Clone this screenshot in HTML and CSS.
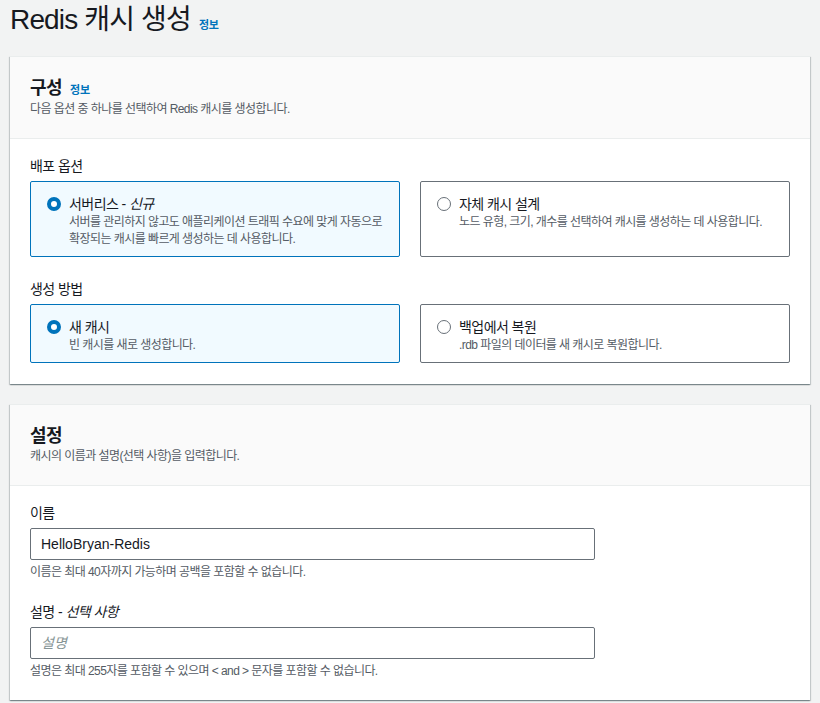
FILE: index.html
```html
<!DOCTYPE html>
<html lang="ko">
<head>
  <meta charset="UTF-8">
  <meta name="viewport" content="width=device-width, initial-scale=1.0">
  <title>Redis 캐시 생성</title>
  <link rel="stylesheet" href="styles.css">
</head>
<body>
  <header class="page-header">
    <h1 class="page-title">Redis 캐시 생성</h1>
    <a class="info-link" href="#">정보</a>
  </header>

  <main>
    <!-- 구성 -->
    <section class="panel">
      <div class="panel-header">
        <div class="panel-title-row">
          <h2 class="panel-title">구성</h2>
          <a class="info-link" href="#">정보</a>
        </div>
        <p class="panel-desc">다음 옵션 중 하나를 선택하여 Redis 캐시를 생성합니다.</p>
      </div>
      <div class="panel-body">
        <div class="field">
          <div class="field-label">배포 옵션</div>
          <div class="tiles">
            <label class="tile selected">
              <span class="radio checked"></span>
              <span class="tile-text">
                <span class="tile-title">서버리스 - <em>신규</em></span>
                <span class="tile-desc">서버를 관리하지 않고도 애플리케이션 트래픽 수요에 맞게 자동으로 확장되는 캐시를 빠르게 생성하는 데 사용합니다.</span>
              </span>
            </label>
            <label class="tile">
              <span class="radio"></span>
              <span class="tile-text">
                <span class="tile-title">자체 캐시 설계</span>
                <span class="tile-desc">노드 유형, 크기, 개수를 선택하여 캐시를 생성하는 데 사용합니다.</span>
              </span>
            </label>
          </div>
        </div>
        <div class="field">
          <div class="field-label">생성 방법</div>
          <div class="tiles">
            <label class="tile selected">
              <span class="radio checked"></span>
              <span class="tile-text">
                <span class="tile-title">새 캐시</span>
                <span class="tile-desc">빈 캐시를 새로 생성합니다.</span>
              </span>
            </label>
            <label class="tile">
              <span class="radio"></span>
              <span class="tile-text">
                <span class="tile-title">백업에서 복원</span>
                <span class="tile-desc">.rdb 파일의 데이터를 새 캐시로 복원합니다.</span>
              </span>
            </label>
          </div>
        </div>
      </div>
    </section>

    <!-- 설정 -->
    <section class="panel">
      <div class="panel-header">
        <div class="panel-title-row">
          <h2 class="panel-title">설정</h2>
        </div>
        <p class="panel-desc">캐시의 이름과 설명(선택 사항)을 입력합니다.</p>
      </div>
      <div class="panel-body">
        <div class="field">
          <div class="field-label">이름</div>
          <input class="text-input" type="text" value="HelloBryan-Redis">
          <p class="field-hint">이름은 최대 40자까지 가능하며 공백을 포함할 수 없습니다.</p>
        </div>
        <div class="field">
          <div class="field-label">설명 - <em>선택 사항</em></div>
          <input class="text-input" type="text" placeholder="설명">
          <p class="field-hint">설명은 최대 255자를 포함할 수 있으며 &lt; and &gt; 문자를 포함할 수 없습니다.</p>
        </div>
      </div>
    </section>
  </main>
</body>
</html>
```

FILE: styles.css
```css
* {
  margin: 0;
  padding: 0;
  box-sizing: border-box;
}

body {
  background-color: #f2f3f3;
  color: #16191f;
  font-family: "Liberation Sans", "Noto Sans CJK KR", sans-serif;
  font-size: 14px;
  line-height: 20px;
  letter-spacing: -0.04em;
  padding: 0 10px;
}

.page-header {
  display: flex;
  align-items: baseline;
  gap: 8px;
  height: 40px;
  margin-bottom: 16px;
}

.page-title {
  font-size: 28px;
  line-height: 40px;
  font-weight: normal;
  letter-spacing: -0.03em;
}

.info-link {
  color: #0073bb;
  font-size: 11px;
  font-weight: bold;
  text-decoration: none;
  letter-spacing: -0.02em;
}

.panel {
  background: white;
  margin-bottom: 20px;
  box-shadow: 0 1px 1px 0 rgba(0, 28, 36, 0.3), 1px 1px 1px 0 rgba(0, 28, 36, 0.15), -1px 1px 1px 0 rgba(0, 28, 36, 0.15);
  border-top: 1px solid #eaeded;
}

.panel-header {
  background: #fafafa;
  border-bottom: 1px solid #eaeded;
  padding: 20px 20px 20px;
}

.panel-title-row {
  display: flex;
  align-items: baseline;
  gap: 8px;
}

.panel-title {
  font-size: 18px;
  line-height: 22px;
  font-weight: bold;
}

.panel-desc {
  font-size: 12px;
  line-height: 18px;
  color: #545b64;
}

.panel-body {
  padding: 17px 20px 21px;
  display: flex;
  flex-direction: column;
  gap: 22px;
}

.field-label {
  margin-bottom: 5px;
}

.field-label em,
.tile-title em {
  font-style: italic;
}

.tiles {
  display: grid;
  grid-template-columns: 1fr 1fr;
  gap: 20px;
}

.tile {
  display: flex;
  gap: 8px;
  border: 1px solid #687078;
  border-radius: 2px;
  padding: 12px 16px 8px;
  cursor: pointer;
}

.tile.selected {
  border-color: #0073bb;
  background: #f1faff;
}

.radio {
  flex: none;
  width: 14px;
  height: 14px;
  margin-top: 3px;
  border-radius: 50%;
  border: 1.5px solid #687078;
  background: white;
}

.radio.checked {
  border: 4px solid #0073bb;
}

.tile-text {
  display: flex;
  flex-direction: column;
}

.tile-desc {
  font-size: 12px;
  line-height: 17px;
  color: #545b64;
}

.text-input {
  display: block;
  width: 565px;
  height: 32px;
  border: 1px solid #687078;
  border-radius: 2px;
  padding: 4px 10px;
  font-family: "Liberation Sans", "Noto Sans CJK KR", sans-serif;
  font-size: 14px;
  letter-spacing: normal;
  color: #16191f;
  margin-top: 1px;
}

.text-input::placeholder {
  color: #879596;
  font-style: italic;
}

.field-hint {
  font-size: 12px;
  line-height: 16px;
  color: #545b64;
  margin-top: 4px;
}
```
